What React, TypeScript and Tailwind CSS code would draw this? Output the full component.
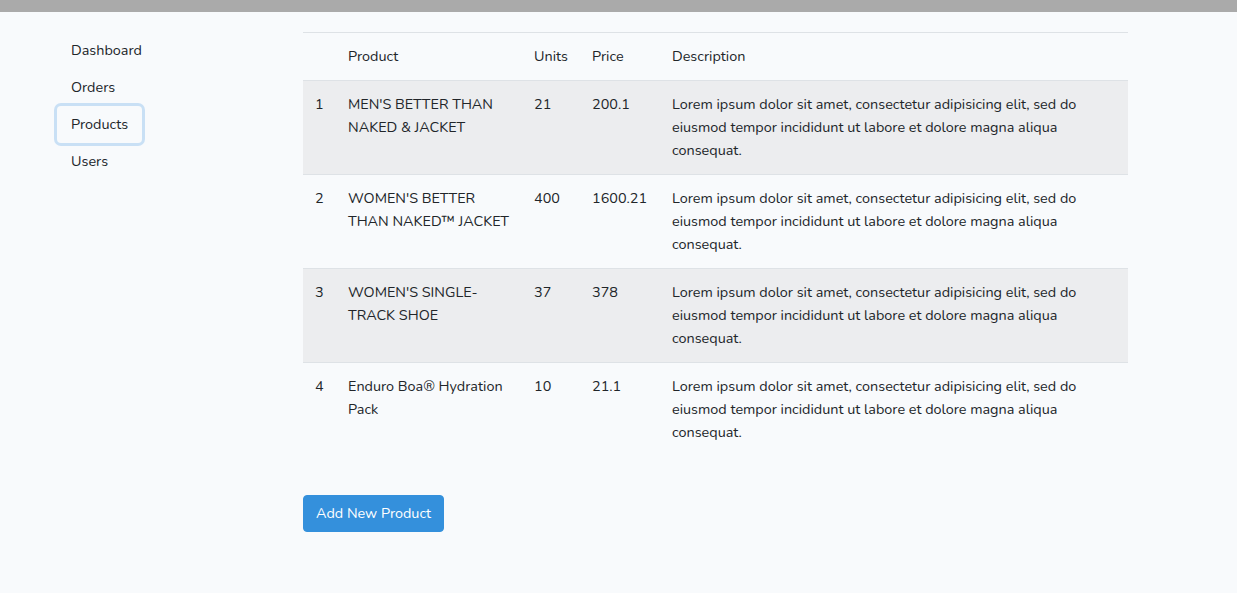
import React from "react";

const rows = [
  { id: 1, name: ["MEN'S BETTER THAN", "NAKED & JACKET"], units: "21", price: "200.1" },
  { id: 2, name: ["WOMEN'S BETTER", "THAN NAKED™ JACKET"], units: "400", price: "1600.21" },
  { id: 3, name: ["WOMEN'S SINGLE-", "TRACK SHOE"], units: "37", price: "378" },
  { id: 4, name: ["Enduro Boa® Hydration", "Pack"], units: "10", price: "21.1" },
];

const desc = [
  "Lorem ipsum dolor sit amet, consectetur adipisicing elit, sed do",
  "eiusmod tempor incididunt ut labore et dolore magna aliqua",
  "consequat.",
];

export default function App() {
  return (
    <div
      className="min-h-[593px] bg-[#f8fafc] text-[#212529] text-[14.4px] leading-[23px]"
      style={{ fontFamily: "Nunito, Lato, 'Noto Sans', sans-serif" }}
    >
      <div className="h-[12px] bg-[#aaaaaa]" />
      <div className="flex pt-[20px]">
        <nav className="w-[303px] pl-[57px] flex flex-col items-start">
          {["Dashboard", "Orders", "Products", "Users"].map((l) => (
            <a
              key={l}
              className={
                "block px-[14px] py-[7px] rounded-[4px] " +
                (l === "Products" ? "shadow-[0_0_0_3px_#c9e0f5]" : "")
              }
            >
              {l}
            </a>
          ))}
        </nav>
        <div className="flex flex-col">
          <table className="w-[825px] table-fixed border-collapse">
            <colgroup>
              <col className="w-[33px]" />
              <col className="w-[186px]" />
              <col className="w-[58px]" />
              <col className="w-[80px]" />
              <col className="w-[468px]" />
            </colgroup>
            <thead>
              <tr className="border-t border-[#dee2e6]">
                <th className="px-[12px] py-[12px] text-left font-normal"></th>
                <th className="px-[12px] py-[12px] text-left font-normal">Product</th>
                <th className="px-[12px] py-[12px] text-left font-normal">Units</th>
                <th className="px-[12px] py-[12px] text-left font-normal">Price</th>
                <th className="px-[12px] py-[12px] text-left font-normal">Description</th>
              </tr>
            </thead>
            <tbody>
              {rows.map((r, i) => (
                <tr
                  key={r.id}
                  className={
                    "border-t border-[#dee2e6] align-top " +
                    (i % 2 === 0 ? "bg-[#ecedef]" : "")
                  }
                >
                  <td className="px-[12px] py-[12px]">{r.id}</td>
                  <td className="px-[12px] py-[12px]">
                    {r.name.map((n) => (
                      <div key={n} className="whitespace-nowrap">{n}</div>
                    ))}
                  </td>
                  <td className="px-[12px] py-[12px]">{r.units}</td>
                  <td className="px-[12px] py-[12px]">{r.price}</td>
                  <td className="px-[12px] py-[12px]">
                    {desc.map((d) => (
                      <div key={d} className="whitespace-nowrap">{d}</div>
                    ))}
                  </td>
                </tr>
              ))}
            </tbody>
          </table>
          <div className="mt-[39px]">
            <button className="bg-[#3490dc] border border-[#3490dc] text-white rounded-[4px] px-[12px] py-[6px] leading-[23px]">
              Add New Product
            </button>
          </div>
        </div>
      </div>
    </div>
  );
}
